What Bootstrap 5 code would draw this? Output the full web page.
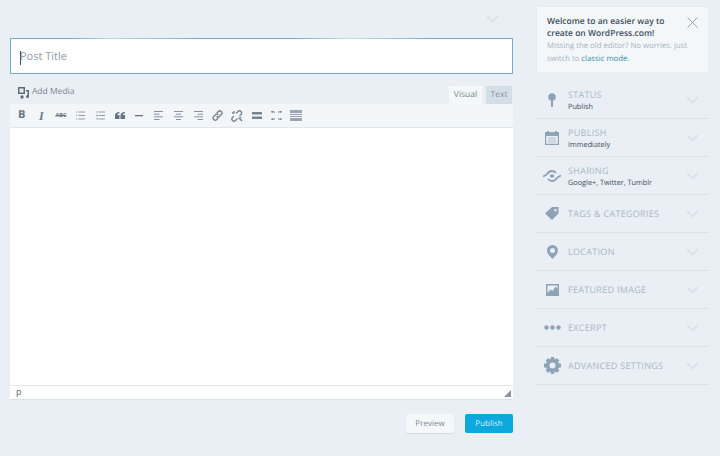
<!DOCTYPE html>
<html lang="en">
<head>
    <meta charset="UTF-8">
    <title>New Post</title>
    <link href="https://cdn.jsdelivr.net/npm/bootstrap@5.3.0/dist/css/bootstrap.min.css" rel="stylesheet">
    <style>
        html, body { height: 456px; overflow: hidden; }
        body { background: #e9eff5; font-family: "Open Sans", sans-serif; color: #3d4c59; text-rendering: geometricPrecision; }
        .main-col { width: 503px; margin-left: 10px; }
        .side-col { width: 173px; margin-left: 23px; padding-top: 7px; }
        .top-chevron { height: 38px; padding: 15px 14px 0 0; }
        .title-box { height: 36px; background: #fff; border: 1px solid #6fadc6; padding-left: 9px; padding-top: 3px; font-size: 11px; color: #8f9ba6; position: relative; }
        .title-box::before { content: ""; position: absolute; left: 0; right: 0; top: -1px; height: 1px; background: linear-gradient(90deg, #6fadc6 12%, #b9d8e4 20%, #6fadc6 38%, #6fadc6 56%, #c6dfe8 68%, #6fadc6 84%); }
        .caret-bar { width: 1px; height: 14px; background: #44505a; margin-right: -1px; }
        .media-row { height: 30px; padding-left: 8px; }
        .add-media { font-size: 8.500px; color: #7b8894; gap: 3px; padding-top: 7px; }
        .tab-btn { width: 33px; height: 18px; font-size: 8.500px; line-height: 18px; text-align: center; color: #76838f; background: #f4f8fa; margin-top: 12px; }
        .tab-btn.alt { width: 26px; background: #d3dfe6; margin-left: 4px; margin-right: 1px; color: #8795a1; }
        .tool-bar { height: 24px; background: #f2f6f9; border-bottom: 1px solid #dfe6ec; padding-left: 2px; }
        .tool-item { width: 19.600px; height: 23px; font-size: 11px; color: #6b7884; }
        .tool-item svg { display: block; }
        .tx-b { font-weight: 700; }
        .tx-i { font-style: italic; font-weight: 700; font-family: "Liberation Serif", serif; font-size: 12px; }
        .tx-s { font-size: 5.500px; font-weight: 700; text-decoration: line-through; }
        .edit-area { height: 257px; background: #fff; }
        .status-bar { height: 14px; background: #fff; border-top: 1px solid #e3e8ed; padding-left: 6px; font-size: 9px; line-height: 12px; color: #555f68; box-shadow: 0 1px 0 #d9e1e8; }
        .grip { position: absolute; right: 2px; bottom: 2px; }
        .btn-row { padding-top: 15px; gap: 11px; }
        .act-btn { height: 19px; width: 48px; font-size: 8px; line-height: 19px; text-align: center; border-radius: 2px; }
        .act-btn.prev { background: #f5f8fa; color: #7c8893; box-shadow: 0 1px 1px #d3dbe2; }
        .act-btn.pub { background: #0ea9dc; color: #cfeef9; }
        .notice-box { height: 65px; background: #f3f7fa; box-shadow: 0 0 1px #d5dee6; padding: 9px 10px 0; margin: 0 1px 9px; font-size: 7.750px; line-height: 12.200px; color: #a6b2bd; position: relative; }
        .notice-box strong { font-size: 8.500px; font-weight: 600; color: #3f4e5b; display: block; }
        .notice-box a { color: #3d8ca3; text-decoration: none; }
        .notice-x { position: absolute; right: 10px; top: 10px; }
        .side-row { height: 38px; border-bottom: 1px solid #dae3ea; padding-left: 7px; padding-right: 10px; }
        .side-icon { width: 18px; margin-right: 7px; }
        .side-icon svg { display: block; margin: 0 auto; }
        .side-name { font-size: 9px; letter-spacing: .3px; color: #a9b7c5; text-transform: uppercase; line-height: 12px; }
        .side-val { font-size: 7.300px; color: #3f4e5b; line-height: 12px; }
        .side-text { padding-top: 1px; }
        .side-text.two-line { padding-top: 3px; }
    </style>
</head>
<body>
<div class="d-flex">
    <div class="main-col">
        <div class="top-chevron d-flex justify-content-end">
            <svg width="13" height="8" viewBox="0 0 13 8" fill="none" stroke="#d6dfe7" stroke-width="1.500"><path d="M1 1l5.500 5.500L12 1"/></svg>
        </div>
        <div class="title-box d-flex align-items-center"><span class="caret-bar"></span>Post Title</div>
        <div class="media-row d-flex justify-content-between">
            <div class="add-media d-flex align-items-center">
                <svg width="11" height="12" viewBox="0 0 11 12" fill="#5f6d7a"><path d="M0 0h7v7H0zM1.500 1.500v4h4v-4z" fill-rule="evenodd"/><path d="M8 3h3v6.500a1.500 1.500 0 1 1-1.500-1.500V4.500H8z"/><circle cx="4" cy="10" r="1.700"/></svg>
                <span>Add Media</span>
            </div>
            <div class="d-flex">
                <div class="tab-btn">Visual</div>
                <div class="tab-btn alt">Text</div>
            </div>
        </div>
        <div class="tool-bar d-flex align-items-center">
            <div class="tool-item d-flex align-items-center justify-content-center tx-b">B</div>
            <div class="tool-item d-flex align-items-center justify-content-center tx-i">I</div>
            <div class="tool-item d-flex align-items-center justify-content-center tx-s">ABC</div>
            <div class="tool-item d-flex align-items-center justify-content-center"><svg width="9" height="9" viewBox="0 0 9 9" fill="none" stroke="#7a8692" stroke-width=".8"><path d="M2.500 1h6.500M2.500 4.500h6.500M2.500 8h6.500M0 1h1.200M0 4.500h1.200M0 8h1.200"/></svg></div>
            <div class="tool-item d-flex align-items-center justify-content-center"><svg width="9" height="9" viewBox="0 0 9 9" fill="none" stroke="#7a8692" stroke-width=".8"><path d="M2.500 1h6.500M2.500 4.500h6.500M2.500 8h6.500"/><path d="M.8 0v2M.2 4h1.300v1H.2M.2 7.500h1.300V9" stroke-width=".6"/></svg></div>
            <div class="tool-item d-flex align-items-center justify-content-center"><svg width="10" height="7" viewBox="0 0 10 7" fill="#66737f"><path d="M4.500 0v1.200C3 1.500 2.400 2.200 2.300 3H4.500v4H0V3.500C0 1.500 1.800 0 4.500 0zM10 0v1.200C8.500 1.500 7.900 2.200 7.800 3H10v4H5.500V3.500C5.500 1.500 7.300 0 10 0z"/></svg></div>
            <div class="tool-item d-flex align-items-center justify-content-center"><svg width="8" height="2" viewBox="0 0 8 2" fill="#66737f"><path d="M0 0h8v1.300H0z"/></svg></div>
            <div class="tool-item d-flex align-items-center justify-content-center"><svg width="9" height="9" viewBox="0 0 9 9" fill="none" stroke="#7c8894" stroke-width=".9"><path d="M0 .5h9M0 3.200h5.500M0 5.800h9M0 8.500h5.500"/></svg></div>
            <div class="tool-item d-flex align-items-center justify-content-center"><svg width="9" height="9" viewBox="0 0 9 9" fill="none" stroke="#7c8894" stroke-width=".9"><path d="M0 .5h9M2 3.200h5M0 5.800h9M2 8.500h5"/></svg></div>
            <div class="tool-item d-flex align-items-center justify-content-center"><svg width="9" height="9" viewBox="0 0 9 9" fill="none" stroke="#7c8894" stroke-width=".9"><path d="M0 .5h9M3.500 3.200H9M0 5.800h9M3.500 8.500H9"/></svg></div>
            <div class="tool-item d-flex align-items-center justify-content-center"><svg width="11" height="11" viewBox="0 0 11 11" fill="none" stroke="#76838f" stroke-width="1.400"><path d="M4.600 3.200l1.700-1.700a2 2 0 0 1 3 3L7.600 6.200a2 2 0 0 1-3 0M6.400 7.800L4.700 9.500a2 2 0 0 1-3-3l1.700-1.700a2 2 0 0 1 3 0"/></svg></div>
            <div class="tool-item d-flex align-items-center justify-content-center"><svg width="12" height="12" viewBox="0 0 12 12" fill="none" stroke="#76838f" stroke-width="1.300"><path d="M5 3.500l2-2a2 2 0 0 1 3 3L8.500 6M6.500 8.500l-2 2a2 2 0 0 1-3-3L3 6M7.500 7.500l3.500 3.500M9 7.500l1.500 .5M3 1v2.200M1 3h2.200"/></svg></div>
            <div class="tool-item d-flex align-items-center justify-content-center"><svg width="10" height="7" viewBox="0 0 10 7" fill="#76838f"><path d="M0 0h10v2.500H0zM0 4.500h10V7H0z"/></svg></div>
            <div class="tool-item d-flex align-items-center justify-content-center"><svg width="11" height="9" viewBox="0 0 11 9" fill="#76838f"><path d="M0 0l3 .3 1 1L3.300 2l-1-1L1 2.300zM11 0L8 .3l-1 1 .7.7 1-1L10 2.300zM0 9l3-.3 1-1L3.300 7l-1 1L1 6.700zM11 9l-3-.3-1-1 .7-.7 1 1 1.300-1.300z"/></svg></div>
            <div class="tool-item d-flex align-items-center justify-content-center"><svg width="12" height="11" viewBox="0 0 12 11" fill="#9aa5af"><path d="M0 0h12v3H0zM0 4h12v1H0zM0 6h12v1H0zM0 8h12v3H0z"/></svg></div>
        </div>
        <div class="edit-area"></div>
        <div class="status-bar position-relative">p
            <svg class="grip" width="7" height="7" viewBox="0 0 7 7" fill="#8a949d"><path d="M7 0v7H0z"/></svg>
        </div>
        <div class="btn-row d-flex justify-content-end">
            <div class="act-btn prev">Preview</div>
            <div class="act-btn pub">Publish</div>
        </div>
    </div>
    <div class="side-col">
        <div class="notice-box">
            <svg class="notice-x" width="11" height="11" viewBox="0 0 11 11" fill="none" stroke="#93a2b0"><path d="M.5 .5l10 10M10.500 .5l-10 10"/></svg>
            <strong>Welcome to an easier way to<br>create on WordPress.com!</strong>
            Missing the old editor? No worries. just<br>switch to <a href="#">classic mode.</a>
        </div>
        <div class="side-row d-flex align-items-center">
            <div class="side-icon"><svg width="8" height="14" viewBox="0 0 8 14" fill="#8fa3b7"><circle cx="4" cy="4" r="3.800"/><path d="M3 7h2v7H3z"/></svg></div>
            <div class="side-text two-line flex-grow-1"><div class="side-name">Status</div><div class="side-val">Publish</div></div>
            <svg width="13" height="8" viewBox="0 0 13 8" fill="none" stroke="#d6dfe7" stroke-width="1.500"><path d="M1 1l5.500 5.500L12 1"/></svg>
        </div>
        <div class="side-row d-flex align-items-center">
            <div class="side-icon"><svg width="14" height="14" viewBox="0 0 14 14" fill="#8fa3b7"><path d="M0 1h2V0h2v1h6V0h2v1h2v13H0zM1.200 5v7.800h11.600V5z" fill-rule="evenodd"/><path d="M3 6.500h8v1H3zM3 8.500h8v1H3zM3 10.500h8v1H3z" opacity=".6"/></svg></div>
            <div class="side-text two-line flex-grow-1"><div class="side-name">Publish</div><div class="side-val">Immediately</div></div>
            <svg width="13" height="8" viewBox="0 0 13 8" fill="none" stroke="#d6dfe7" stroke-width="1.500"><path d="M1 1l5.500 5.500L12 1"/></svg>
        </div>
        <div class="side-row d-flex align-items-center">
            <div class="side-icon"><svg width="18" height="12" viewBox="0 0 18 12" fill="none" stroke="#8fa3b7" stroke-width="1.800"><path d="M0 6.500C1.500 6 3 5.500 4 4c1-1.500 3-3 5-3s3 .7 4 2M18 5.500c-1.500.5-3 1-4 2.500-1 1.500-3 3-5 3s-3-.7-4-2"/><ellipse cx="9" cy="6" rx="2.200" ry="1.800" fill="#8fa3b7" stroke="none"/></svg></div>
            <div class="side-text two-line flex-grow-1"><div class="side-name">Sharing</div><div class="side-val">Google+, Twitter, Tumblr</div></div>
            <svg width="13" height="8" viewBox="0 0 13 8" fill="none" stroke="#d6dfe7" stroke-width="1.500"><path d="M1 1l5.500 5.500L12 1"/></svg>
        </div>
        <div class="side-row d-flex align-items-center">
            <div class="side-icon"><svg width="14" height="13" viewBox="0 0 14 13" fill="#8fa3b7"><path d="M7 0h6.500v6.500L7 13 0 6.500zM10.500 2a1.200 1.200 0 1 0 0 2.400 1.200 1.200 0 0 0 0-2.400z" fill-rule="evenodd"/></svg></div>
            <div class="side-text flex-grow-1"><div class="side-name">Tags &amp; Categories</div></div>
            <svg width="13" height="8" viewBox="0 0 13 8" fill="none" stroke="#d6dfe7" stroke-width="1.500"><path d="M1 1l5.500 5.500L12 1"/></svg>
        </div>
        <div class="side-row d-flex align-items-center">
            <div class="side-icon"><svg width="11" height="14" viewBox="0 0 11 14" fill="#8fa3b7"><path d="M5.500 0a5.500 5.500 0 0 1 5.500 5.500C11 9 7 12 5.500 14 4 12 0 9 0 5.500A5.500 5.500 0 0 1 5.500 0zm0 3a2.500 2.500 0 1 0 0 5 2.500 2.500 0 0 0 0-5z" fill-rule="evenodd"/></svg></div>
            <div class="side-text flex-grow-1"><div class="side-name">Location</div></div>
            <svg width="13" height="8" viewBox="0 0 13 8" fill="none" stroke="#d6dfe7" stroke-width="1.500"><path d="M1 1l5.500 5.500L12 1"/></svg>
        </div>
        <div class="side-row d-flex align-items-center">
            <div class="side-icon"><svg width="13" height="12" viewBox="0 0 13 12" fill="#8fa3b7"><path d="M0 0h13v12H0zM1.500 9l3-3.500 2 1.500 3-4.500 2 2.500V1.500h-10z" fill-rule="evenodd"/></svg></div>
            <div class="side-text flex-grow-1"><div class="side-name">Featured Image</div></div>
            <svg width="13" height="8" viewBox="0 0 13 8" fill="none" stroke="#d6dfe7" stroke-width="1.500"><path d="M1 1l5.500 5.500L12 1"/></svg>
        </div>
        <div class="side-row d-flex align-items-center">
            <div class="side-icon"><svg width="17" height="5" viewBox="0 0 17 5" fill="#8fa3b7"><circle cx="2.500" cy="2.500" r="2.200"/><circle cx="8.500" cy="2.500" r="2.200"/><circle cx="14.500" cy="2.500" r="2.200"/></svg></div>
            <div class="side-text flex-grow-1"><div class="side-name">Excerpt</div></div>
            <svg width="13" height="8" viewBox="0 0 13 8" fill="none" stroke="#d6dfe7" stroke-width="1.500"><path d="M1 1l5.500 5.500L12 1"/></svg>
        </div>
        <div class="side-row d-flex align-items-center">
            <div class="side-icon"><svg width="17" height="17" viewBox="0 0 17 17" fill="#8fa3b7"><path d="M7 0h3l.5 2.500 2.500-1.200 2.300 2.200L14 6l3 .8v3.400l-3 .8 1.300 2.500-2.300 2.200-2.500-1.200L10 17H7l-.5-2.500-2.500 1.200-2.300-2.200L3 11l-3-.8V6.800L3 6 1.700 3.500 4 1.300l2.500 1.200zM8.500 5.500a3 3 0 1 0 0 6 3 3 0 0 0 0-6z" fill-rule="evenodd"/></svg></div>
            <div class="side-text flex-grow-1"><div class="side-name">Advanced Settings</div></div>
            <svg width="13" height="8" viewBox="0 0 13 8" fill="none" stroke="#d6dfe7" stroke-width="1.500"><path d="M1 1l5.500 5.500L12 1"/></svg>
        </div>
    </div>
</div>
<script src="https://cdn.jsdelivr.net/npm/bootstrap@5.3.0/dist/js/bootstrap.bundle.min.js"></script>
</body>
</html>
